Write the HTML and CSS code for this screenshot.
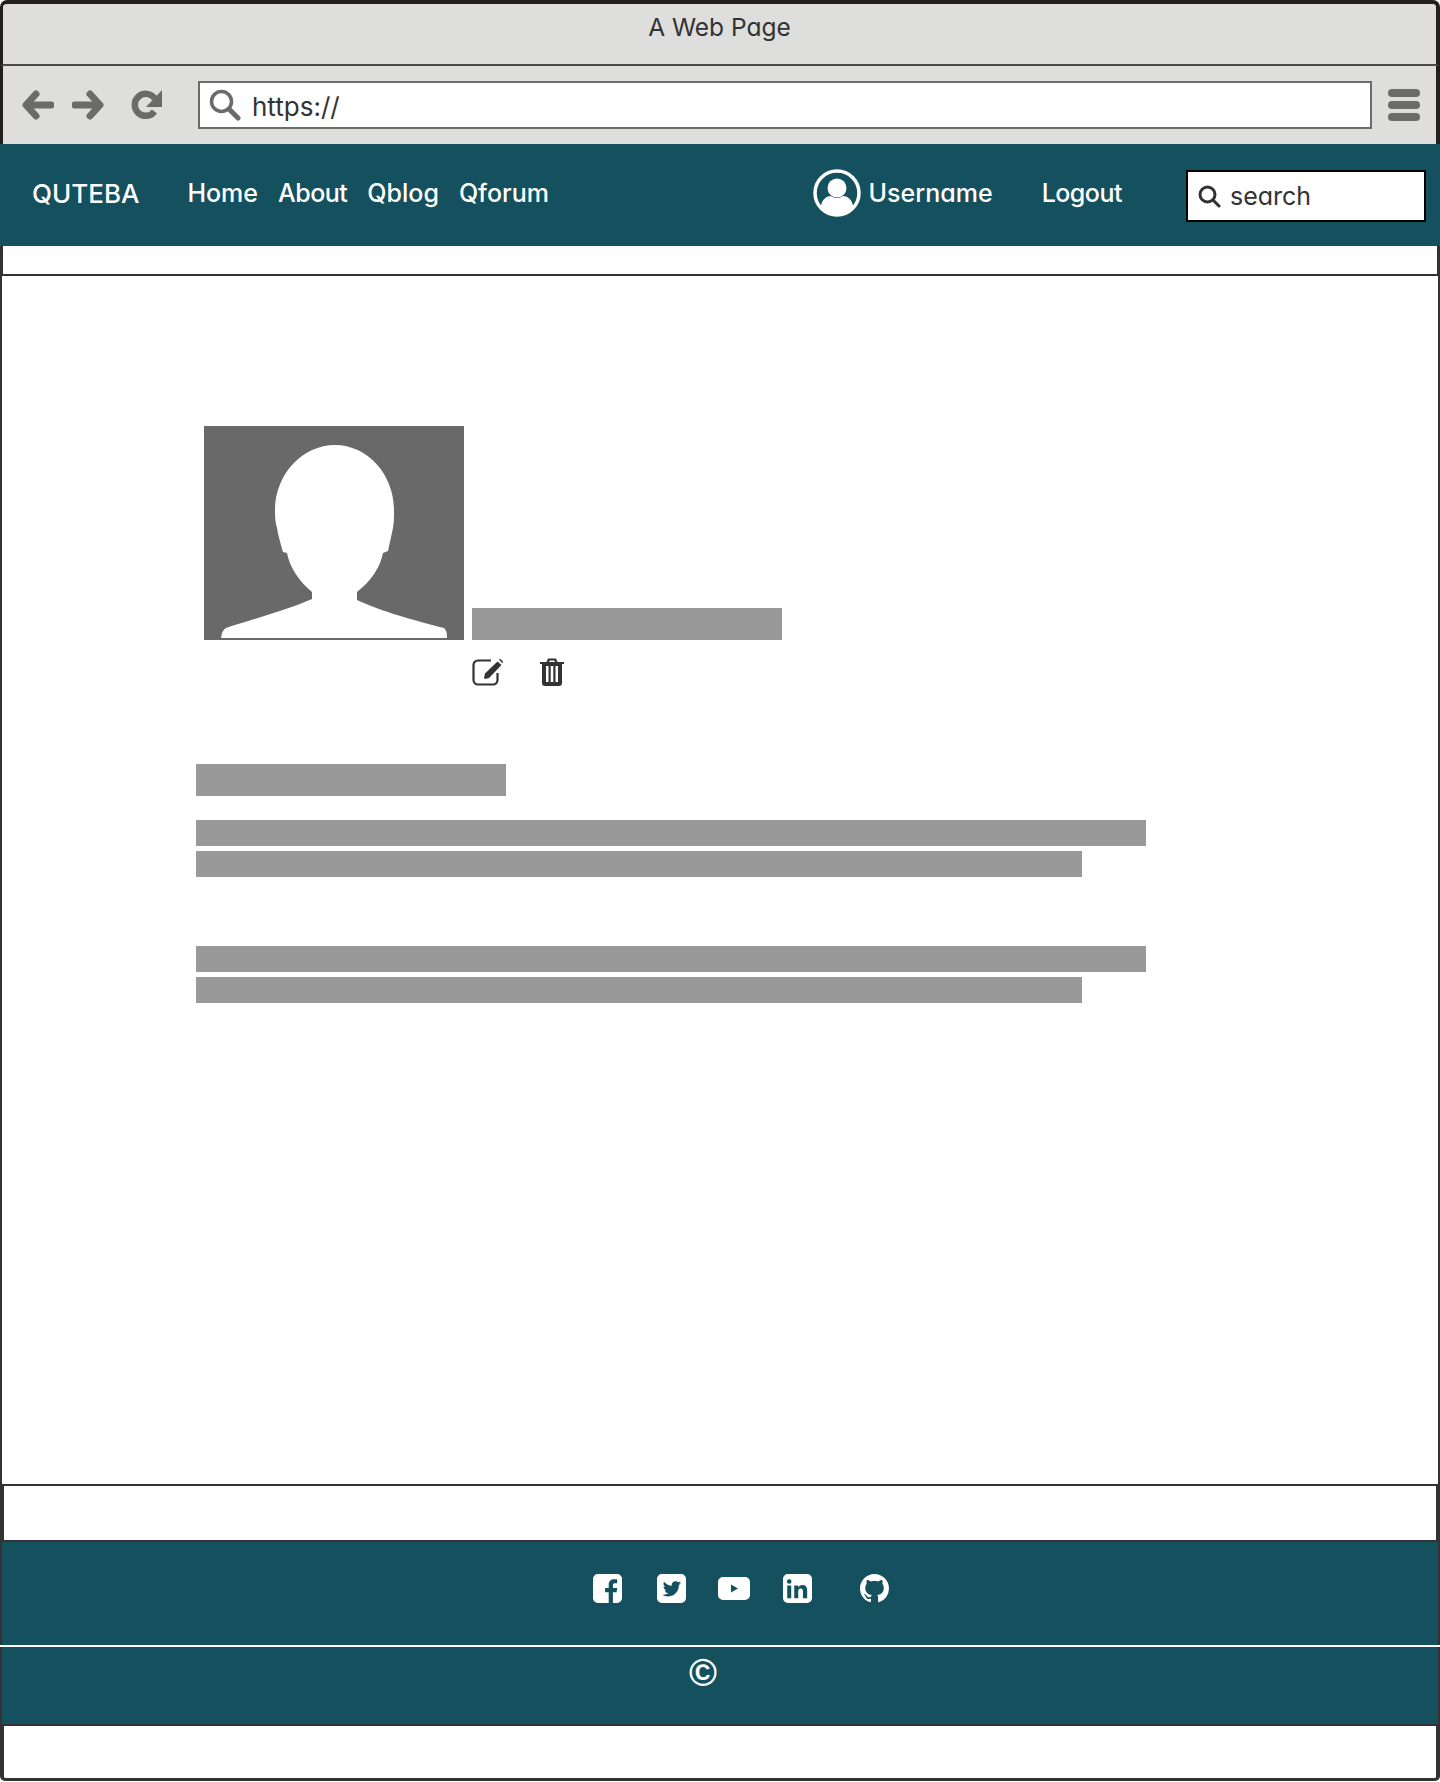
FILE: index.html
```html
<!DOCTYPE html>
<html lang="en">
<head>
    <meta charset="UTF-8">
    <meta name="viewport" content="width=device-width, initial-scale=1.0">
    <title>A Web Page</title>
    <link rel="stylesheet" href="styles.css">
</head>
<body>
    <div class="browser">
        <div class="titlebar">A Web Page</div>

        <div class="toolbar">
            <svg class="tool-icon" viewBox="0 0 32 32"><path d="M14 5 4 16l10 11M5 16h24" class="tool-stroke"/></svg>
            <svg class="tool-icon forward" viewBox="0 0 32 32"><path d="m18 5 10 11-10 11M27 16H3" class="tool-stroke"/></svg>
            <svg class="tool-icon reload" viewBox="0 0 32 32"><path d="M23.5 22.5a11 11 0 1 1 .3-13" fill="none" stroke="#6b6b6b" stroke-width="6.500"/><path d="M31 1v17H15z" fill="#6b6b6b"/></svg>
            <div class="address">
                <svg class="address-icon" viewBox="0 0 32 32"><circle cx="12.500" cy="12.500" r="10" fill="none" stroke="#6b6b6b" stroke-width="3.500"/><path d="m20 20 9 9" stroke="#6b6b6b" stroke-width="5" stroke-linecap="round"/></svg>
                <span class="address-text">https://</span>
            </div>
            <div class="burger"><span></span><span></span><span></span></div>
        </div>

        <nav class="navbar">
            <a class="brand">QUTEBA</a>
            <a class="nav-link first">Home</a>
            <a class="nav-link about">About</a>
            <a class="nav-link">Qblog</a>
            <a class="nav-link">Qforum</a>
            <div class="user">
                <svg class="user-icon" viewBox="0 0 48 48">
                    <circle cx="24" cy="24" r="22" fill="none" stroke="#fff" stroke-width="3.500"/>
                    <circle cx="24" cy="19" r="9.500" fill="#fff"/>
                    <path d="M8 37c1-7 6-10 10-10 2 1.500 4 2 6 2s4-.500 6-2c4 0 9 3 10 10-4 5-10 8-16 8S12 42 8 37z" fill="#fff"/>
                </svg>
                <a class="nav-text">Username</a>
            </div>
            <a class="nav-text logout">Logout</a>
            <div class="search">
                <svg class="search-icon" viewBox="0 0 24 24"><circle cx="10.500" cy="10.500" r="7.500" fill="none" stroke="#333" stroke-width="3"/><path d="m16 16 6 6" stroke="#333" stroke-width="3" stroke-linecap="round"/></svg>
                <span class="search-text">search</span>
            </div>
        </nav>

        <div class="strip strip-top"></div>

        <main class="content">
            <section class="profile">
                <svg class="avatar" viewBox="0 0 260 214">
                    <rect width="260" height="214" fill="#696969"/>
                    <path d="M17 212Q18 204 22 202C50 193 85 183 108 173V166C95 155 86 142 83 127L79 126C76 116 74 108 73 102C71 96 71 90 71 84C71 48 99 19 131 19C163 19 190 48 190 84C190 92 190 96 189 102L184 125 179 127C176 142 167 155 153 166V174C176 185 212 195 240 202Q243 204 243 212Z" fill="#fff"/>
                </svg>
                <div class="bar bar-title"></div>
                <div class="actions">
                    <svg class="edit-icon" viewBox="0 0 32 28">
                        <path d="M19 2.500H6A4.500 4.500 0 0 0 1.500 7v15A4.500 4.500 0 0 0 6 26.500h15a4.500 4.500 0 0 0 4.500-4.500v-7" fill="none" stroke="#333" stroke-width="2.200"/>
                        <path d="M25.500 3.500 29.500 7 17 20l-4 1 -1-1 1-4.500z" fill="#333"/>
                        <path d="M27 1.500 28 .8l3 2.700-.7 1.800z" fill="#333"/>
                    </svg>
                    <svg class="trash-icon" viewBox="0 0 24 28">
                        <path fill-rule="evenodd" d="M0 4h6.500L8 .5h8L17.500 4H24v2h-2v19a3 3 0 0 1-3 3H5a3 3 0 0 1-3-3V6H0zM9 4h6l-.8-1.600H9.800zM6 8v16h2.500V8zm4.700 0v16h2.600V8zm4.800 0v16H18V8z" fill="#333"/>
                    </svg>
                </div>
            </section>

            <div class="bar bar-title heading"></div>
            <div class="bar bar-long"></div>
            <div class="bar bar-short"></div>
            <div class="bar bar-long para-gap"></div>
            <div class="bar bar-short"></div>
        </main>

        <div class="strip strip-bottom"></div>

        <footer class="footer">
            <div class="social">
                <svg class="social-icon" viewBox="0 0 24 24"><path d="M4 0h16a4 4 0 0 1 4 4v16a4 4 0 0 1-4 4h-3.500v-9h3l.5-3.500h-3.500V9.300c0-1 .3-1.700 1.700-1.700H20V4.500c-.3 0-1.400-.1-2.600-.1-2.600 0-4.400 1.600-4.400 4.500v2.600H10V15h3v9H4a4 4 0 0 1-4-4V4a4 4 0 0 1 4-4z"/></svg>
                <svg class="social-icon twitter" viewBox="0 0 24 24"><path fill-rule="evenodd" d="M4 0h16a4 4 0 0 1 4 4v16a4 4 0 0 1-4 4H4a4 4 0 0 1-4-4V4a4 4 0 0 1 4-4zM20 7.300c-.6.300-1.200.400-1.800.500.600-.400 1.100-1 1.400-1.700-.6.400-1.300.600-2 .800-.6-.600-1.400-1-2.300-1-1.700 0-3.100 1.400-3.100 3.200 0 .200 0 .500.100.700C9.700 9.700 7.400 8.400 5.800 6.500c-.3.500-.4 1-.4 1.600 0 1.100.5 2.100 1.400 2.600-.5 0-1-.1-1.400-.4v.1c0 1.500 1.100 2.800 2.500 3.100-.5.100-.9.100-1.400.1.400 1.300 1.600 2.200 2.900 2.200-1.100.9-2.400 1.400-3.900 1.400H4.400c1.400.9 3 1.400 4.800 1.400 5.800 0 8.900-4.800 8.900-9v-.4c.7-.5 1.400-1.100 1.900-1.900z"/></svg>
                <svg class="social-icon youtube" viewBox="0 0 32 23"><path fill-rule="evenodd" d="M5 0h22a5 5 0 0 1 5 5v13a5 5 0 0 1-5 5H5a5 5 0 0 1-5-5V5a5 5 0 0 1 5-5zm8 7.500v8l7-4z"/></svg>
                <svg class="social-icon linkedin" viewBox="0 0 24 24"><path fill-rule="evenodd" d="M4 0h16a4 4 0 0 1 4 4v16a4 4 0 0 1-4 4H4a4 4 0 0 1-4-4V4a4 4 0 0 1 4-4zM3.500 9.500V20h3.300V9.500zM5.150 4.300a1.900 1.900 0 1 0 0 3.800 1.900 1.900 0 0 0 0-3.800zM9.300 9.500V20h3.300v-5.500c0-1.500.7-2.500 2-2.500s1.900 1 1.900 2.400V20H20v-6.300c0-3-1.600-4.500-3.900-4.500-1.800 0-2.900 1-3.500 1.900V9.500z"/></svg>
                <svg class="social-icon github" viewBox="0 0 16 16"><path d="M8 0C3.580 0 0 3.580 0 8c0 3.540 2.290 6.530 5.470 7.590.4.070.55-.17.55-.38 0-.19-.01-.82-.01-1.490-2.010.37-2.530-.49-2.690-.94-.09-.23-.48-.94-.82-1.130-.28-.15-.68-.52-.01-.53.63-.01 1.080.58 1.230.82.72 1.210 1.870.87 2.330.66.07-.52.28-.87.51-1.070-1.780-.2-3.640-.89-3.640-3.950 0-.87.31-1.590.82-2.150-.08-.2-.36-1.020.08-2.120 0 0 .67-.21 2.200.82.64-.18 1.320-.27 2-.27.68 0 1.360.09 2 .27 1.530-1.040 2.200-.82 2.200-.82.44 1.100.16 1.920.08 2.120.51.56.82 1.270.82 2.150 0 3.070-1.870 3.750-3.650 3.950.29.25.54.73.54 1.480 0 1.070-.01 1.930-.01 2.200 0 .21.15.46.55.38A8.013 8.013 0 0016 8c0-4.420-3.580-8-8-8z"/></svg>
            </div>
            <div class="copyright">©</div>
        </footer>

        <div class="strip-end"></div>
    </div>
</body>
</html>
```

FILE: styles.css
```css
body {
    margin: 0;
    background: #fff;
    color: #333;
    font-family: Inter, "Liberation Sans", sans-serif;
    font-feature-settings: "cv11";
}

.browser {
    width: 1440px;
    height: 1782px;
    display: flex;
    flex-direction: column;
    overflow: hidden;
}

/* browser chrome */

.titlebar {
    box-sizing: border-box;
    height: 66px;
    flex: none;
    padding-top: 5px;
    text-align: center;
    font-size: 24.500px;
    line-height: 36px;
    background: #dededc;
    border: solid #231f20;
    border-width: 4px 4px 0 3px;
    border-bottom: 2px solid #4a4a4a;
    border-radius: 7px 7px 0 0;
}

.toolbar {
    box-sizing: border-box;
    height: 78px;
    flex: none;
    display: flex;
    align-items: center;
    padding-left: 19px;
    background: #dededc;
    border-left: 3px solid #231f20;
    border-right: 4px solid #231f20;
}

.tool-icon {
    width: 32px;
    height: 32px;
    flex: none;
}

.tool-stroke {
    fill: none;
    stroke: #6b6b6b;
    stroke-width: 7;
    stroke-linecap: round;
    stroke-linejoin: round;
}

.forward {
    margin-left: 18px;
}

.reload {
    margin-left: 27px;
}

.address {
    box-sizing: border-box;
    width: 1174px;
    height: 48px;
    margin-left: 35px;
    display: flex;
    align-items: center;
    background: #fff;
    border: 2px solid #6b6b6b;
}

.address-icon {
    width: 32px;
    height: 32px;
    margin-left: 9px;
}

.address-text {
    margin-left: 11px;
    padding-top: 2px;
    font-size: 26px;
}

.burger {
    width: 32px;
    margin-left: 16px;
    display: flex;
    flex-direction: column;
    gap: 4px;
}

.burger span {
    height: 8px;
    border-radius: 4px;
    background: #6b6b6b;
}

/* nav */

.navbar {
    box-sizing: border-box;
    height: 102px;
    flex: none;
    display: flex;
    align-items: center;
    padding: 0 0 4px 32px;
    background: #15505e;
    color: #fff;
    font-size: 25px;
    font-weight: 500;
}

.brand {
    font-size: 26px;
}

.first {
    margin-left: 48px;
}

.nav-link {
    margin-right: 20px;
}

.about {
    letter-spacing: -0.5px;
}

.user {
    margin-left: auto;
    display: flex;
    align-items: center;
    gap: 8px;
}

.user-icon {
    width: 48px;
    height: 48px;
}

.logout {
    margin-left: 49px;
    letter-spacing: -0.5px;
}

.search {
    box-sizing: border-box;
    width: 240px;
    height: 52px;
    margin: 6px 14px 0 64px;
    display: flex;
    align-items: center;
    background: #fff;
    color: #333;
    border: 2px solid #000;
    font-weight: 400;
}

.search-icon {
    width: 24px;
    height: 24px;
    margin-left: 9px;
}

.search-text {
    margin-left: 9px;
    font-size: 25px;
}

/* white bands */

.strip {
    box-sizing: border-box;
    flex: none;
    background: #fff;
    border: solid #333;
}

.strip-top {
    height: 30px;
    border-width: 0 3px 2px;
}

.strip-bottom {
    height: 58px;
    border-width: 2px 4px;
}

.strip-end {
    box-sizing: border-box;
    height: 55px;
    flex: none;
    border: solid #333;
    border-width: 0 4px 3px;
    border-radius: 0 0 5px 5px;
}

/* main */

.content {
    box-sizing: border-box;
    height: 1208px;
    flex: none;
    padding: 150px 0 0 194px;
    border: solid #333;
    border-width: 0 2px;
}

.profile {
    display: grid;
    grid-template-columns: 260px 310px;
    column-gap: 8px;
    margin-left: 8px;
    align-items: end;
}

.avatar {
    width: 260px;
    height: 214px;
    display: block;
}

.bar {
    background: #999;
}

.bar-title {
    width: 310px;
    height: 32px;
}

.bar-long {
    width: 950px;
    height: 26px;
}

.bar-short {
    width: 886px;
    height: 26px;
    margin-top: 5px;
}

.actions {
    grid-column: 2;
    display: flex;
    align-items: flex-start;
    gap: 36px;
    margin-top: 18px;
}

.edit-icon {
    width: 32px;
    height: 28px;
}

.trash-icon {
    width: 24px;
    height: 28px;
}

.heading {
    margin-top: 78px;
    margin-bottom: 24px;
}

.para-gap {
    margin-top: 69px;
}

/* footer */

.footer {
    box-sizing: border-box;
    height: 184px;
    flex: none;
    background: #15505e;
    color: #fff;
    border-bottom: 2px solid #333;
    border-left: 2px solid #333;
    border-right: 2px solid #333;
}

.social {
    box-sizing: border-box;
    height: 103px;
    padding: 32px 0 0 591px;
    display: flex;
    align-items: flex-start;
}

.social-icon {
    width: 29px;
    height: 29px;
    fill: #fff;
    flex: none;
}

.twitter {
    margin-left: 35px;
}

.youtube {
    width: 32px;
    height: 23px;
    margin: 3px 0 0 32px;
}

.linkedin {
    margin-left: 33px;
}

.github {
    margin-left: 48px;
}

.copyright {
    margin: 0 -2px;
    padding: 3px 0 0 689px;
    border-top: 2px solid #fff;
    font-family: "Liberation Sans", sans-serif;
    font-size: 38px;
    font-weight: 700;
    line-height: 46px;
}
```
